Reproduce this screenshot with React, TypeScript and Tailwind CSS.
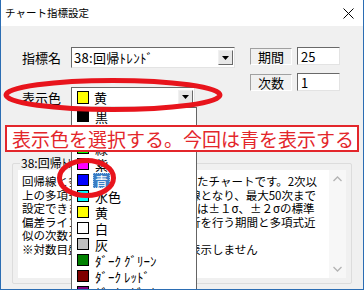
import React from 'react';

const jp = { fontFamily: '"Noto Sans CJK JP", "Noto Sans", sans-serif' };

const colors: { name: string; color: string; selected?: boolean }[] = [
  { name: '黒', color: '#000000' },
  { name: '赤', color: '#ff0000' },
  { name: '緑', color: '#00ff00' },
  { name: '紫', color: '#ff00ff' },
  { name: '青', color: '#0000ff', selected: true },
  { name: '水色', color: '#00ffff' },
  { name: '黄', color: '#ffff00' },
  { name: '白', color: '#ffffff' },
  { name: '灰', color: '#c0c0c0' },
  { name: 'ﾀﾞｰｸ ｸﾞﾘｰﾝ', color: '#008000' },
  { name: 'ﾀﾞｰｸ ﾚｯﾄﾞ', color: '#800000' },
  { name: 'ﾀﾞｰｸ ﾏｾﾞﾝﾀ', color: '#800080' },
];

function DropButton() {
  return (
    <div className="flex h-[15px] w-[15px] items-center justify-center border border-t-[#f0f0f0] border-l-[#f0f0f0] border-r-[#696969] border-b-[#696969] bg-[#e8e8e8]">
      <svg width="7" height="4" viewBox="0 0 7 4">
        <path d="M0 0h7L3.5 4z" fill="#000" />
      </svg>
    </div>
  );
}

function Sunken({ className, children }: { className: string; children?: React.ReactNode }) {
  return (
    <div
      className={`flex items-center border border-t-[#696969] border-l-[#696969] border-r-[#e3e3e3] border-b-[#e3e3e3] bg-white ${className}`}
    >
      {children}
    </div>
  );
}

export default function App() {
  return (
    <div
      className="relative h-[290px] w-[364px] overflow-hidden border-x border-b border-[#2b6db3] bg-[#f0f0f0] text-[13px] text-black"
      style={jp}
    >
      {/* title bar */}
      <div className="flex h-[26px] items-center justify-between bg-white pl-[4px] pr-[9px]">
        <span className="text-[10.5px] leading-none">チャート指標設定</span>
        <svg width="11" height="11" viewBox="0 0 11 11">
          <path d="M0.5 0.5l10 10M10.5 0.5l-10 10" stroke="#000" strokeWidth="1" />
        </svg>
      </div>

      {/* top controls */}
      <div className="mt-[21px] flex pl-[21px]">
        <div className="flex flex-col gap-[19px]">
          <div className="flex items-center">
            <span className="w-[49px] leading-none">指標名</span>
            <Sunken className="h-[21px] w-[164px] justify-between pl-[2px] pr-[1px]">
              <span className="leading-none tracking-[0.3px]">38:回帰ﾄﾚﾝﾄﾞ</span>
              <DropButton />
            </Sunken>
          </div>
          <div className="flex items-center">
            <span className="w-[49px] leading-none">表示色</span>
            <Sunken className="h-[20px] w-[124px] justify-between pl-[5px] pr-[1px]">
              <div className="flex items-center gap-[5px]">
                <span className="h-[13px] w-[12px] border border-black bg-[#ffff00]" />
                <span className="leading-none">黄</span>
              </div>
              <DropButton />
            </Sunken>
          </div>
        </div>

        <div className="ml-[15px] flex flex-col gap-[8px]">
          <div className="flex items-center gap-[5px]">
            <div className="flex h-[17px] w-[42px] items-center justify-center border border-t-[#a0a0a0] border-l-[#a0a0a0] border-r-white border-b-white leading-none">
              期間
            </div>
            <Sunken className="h-[18px] w-[43px] pl-[3px]">
              <span className="leading-none">25</span>
            </Sunken>
          </div>
          <div className="flex items-center gap-[5px]">
            <div className="flex h-[17px] w-[42px] items-center justify-center border border-t-[#a0a0a0] border-l-[#a0a0a0] border-r-white border-b-white leading-none">
              次数
            </div>
            <Sunken className="h-[18px] w-[43px] pl-[3px]">
              <span className="leading-none">1</span>
            </Sunken>
          </div>
        </div>
      </div>

      {/* group box with description */}
      <div className="relative ml-[11px] mt-[56px] h-[121px] w-[340px] rounded-[2px] border border-[#dcdcdc] px-[5px] pb-[5px] pt-[6px]">
        <span className="absolute left-[7px] top-[-8px] bg-[#f0f0f0] px-[1px] text-[12px] leading-[14px]">
          38:回帰ﾄﾚﾝﾄﾞ
        </span>
        <div className="flex h-full bg-white">
          <div className="flex-1 pl-[4px] pt-[5px] text-[11.5px] leading-[13.6px] whitespace-nowrap">
            <div className="flex">
              <span className="inline-block w-[175px] overflow-hidden">回帰線と多項式回帰曲線を表示し</span>
              <span>たチャートです。2次以</span>
            </div>
            <div className="flex">
              <span className="inline-block w-[167px] overflow-hidden">上の多項式の場合は曲線を描く</span>
              <span>線となり、最大50次まで</span>
            </div>
            <div className="flex">
              <span className="inline-block w-[175px] overflow-hidden">設定できます。バンドの線幅</span>
              <span>は±１σ、±２σの標準</span>
            </div>
            <div className="flex">
              <span className="inline-block w-[167px] overflow-hidden">偏差ラインです。回帰分析</span>
              <span>析を行う期間と多項式近</span>
            </div>
            <div>似の次数を設定します。</div>
            <div className="flex">
              <span className="inline-block w-[167px] overflow-hidden">※対数目盛では回帰線を</span>
              <span>表示しません</span>
            </div>
          </div>
          <div className="flex w-[17px] flex-col items-center justify-between bg-[#f7f7f7] py-[6px]">
            <svg width="9" height="6" viewBox="0 0 9 6">
              <path d="M0.5 5L4.5 1l4 4" fill="none" stroke="#b4b4b4" strokeWidth="1.3" />
            </svg>
            <svg width="9" height="6" viewBox="0 0 9 6">
              <path d="M0.5 1l4 4 4-4" fill="none" stroke="#b4b4b4" strokeWidth="1.3" />
            </svg>
          </div>
        </div>
      </div>

      {/* opened dropdown list */}
      <div className="absolute left-[70px] top-[107px] h-[200px] w-[126px] border border-[#646464] bg-white">
        {colors.map((c) => (
          <div key={c.name} className="flex h-[16px] items-center pl-[5px]">
            <span className="h-[12px] w-[12px] shrink-0 border border-black" style={{ background: c.color }} />
            {c.selected ? (
              <span className="ml-[4px] flex h-[15px] items-center border border-dotted border-[#9fc4ea] bg-[#3a7dc4] px-[1px] leading-none text-white">
                {c.name}
              </span>
            ) : (
              <span className="ml-[6px] whitespace-nowrap leading-none">{c.name}</span>
            )}
          </div>
        ))}
      </div>

      {/* annotation */}
      <div className="absolute left-[4px] top-[125px] flex h-[27px] w-[354px] items-center border-2 border-[#e3262b] bg-white pl-[5px]">
        <span className="text-[19px] leading-none whitespace-nowrap text-[#e3262b]">
          表示色を選択する。今回は青を表示する
        </span>
      </div>

      {/* red circles */}
      <svg className="pointer-events-none absolute left-[-1px] top-0" width="364" height="290" viewBox="0 0 364 290">
        <ellipse cx="113" cy="95" rx="107" ry="14.5" fill="none" stroke="#e8141c" strokeWidth="5" />
        <ellipse cx="86.5" cy="178" rx="27" ry="17.5" fill="none" stroke="#e8141c" strokeWidth="5" />
      </svg>
    </div>
  );
}
